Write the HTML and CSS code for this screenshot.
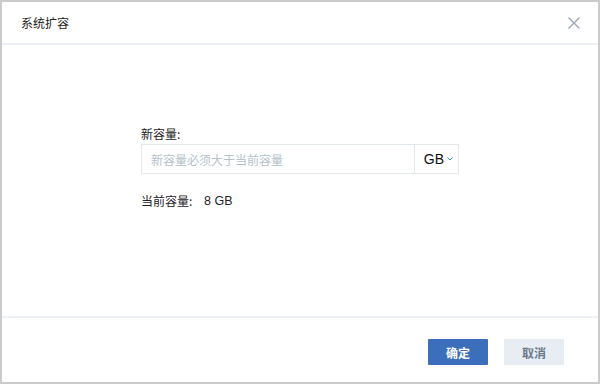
FILE: index.html
```html
<!DOCTYPE html>
<html lang="zh-CN">
<head>
    <meta charset="UTF-8">
    <title>系统扩容</title>
    <link rel="stylesheet" href="styles.css">
</head>
<body>
    <div class="dialog">
        <div class="dialog-header">
            <span class="dialog-title">系统扩容</span>
            <span class="dialog-close">
                <svg width="12" height="12" viewBox="0 0 12 12">
                    <path d="M0.5 0.5 L11.5 11.5 M11.5 0.5 L0.5 11.5" stroke="#9ba6b6" stroke-width="1.4" fill="none"/>
                </svg>
            </span>
        </div>

        <div class="dialog-body">
            <div class="form">
                <label class="form-label" for="capacity">新容量:</label>
                <div class="input-group">
                    <input type="text" id="capacity" placeholder="新容量必须大于当前容量">
                    <div class="unit-select">
                        <span>GB</span>
                        <svg width="6" height="4" viewBox="0 0 6 4">
                            <path d="M0.5 0.5 L3 3 L5.5 0.5" stroke="#4a86d6" stroke-width="1" fill="none"/>
                        </svg>
                    </div>
                </div>
                <div class="current">
                    <span class="current-label">当前容量:</span>
                    <span class="current-value">8 GB</span>
                </div>
            </div>
        </div>

        <div class="dialog-footer">
            <button class="btn btn-primary">确定</button>
            <button class="btn btn-default">取消</button>
        </div>
    </div>
</body>
</html>
```

FILE: styles.css
```css
html, body {
    margin: 0;
    padding: 0;
}
body {
    font-family: "Liberation Sans", "Noto Sans CJK SC", sans-serif;
    font-size: 12px;
    color: #1f2329;
    background-color: white;
}
.dialog {
    width: 600px;
    height: 384px;
    box-sizing: border-box;
    border: 2px solid #cbcbcb;
    display: flex;
    flex-direction: column;
    background-color: white;
}
.dialog-header {
    height: 43px;
    box-sizing: border-box;
    border-bottom: 2px solid #edf1f5;
    display: flex;
    align-items: center;
    justify-content: space-between;
    padding: 0 18px 0 19px;
}
.dialog-title {
    font-family: "Noto Sans CJK SC", sans-serif;
    font-size: 12px;
    color: #222;
}
.dialog-close {
    display: flex;
    width: 12px;
    height: 12px;
    margin-top: 1px;
}
.dialog-body {
    flex: 1;
    display: flex;
    justify-content: center;
    padding-top: 81px;
}
.form {
    width: 318px;
}
.form-label {
    display: block;
    font-family: "Noto Sans CJK SC", sans-serif;
    font-size: 12px;
    line-height: 16px;
    margin-bottom: 2px;
    color: #222;
}
.input-group {
    display: flex;
    height: 30px;
    box-sizing: border-box;
    border: 1px solid #e2e7ed;
}
.input-group input {
    flex: 1;
    border: none;
    outline: none;
    padding: 0 0 0 9px;
    font-family: "Noto Sans CJK SC", sans-serif;
    font-size: 12px;
    color: #222;
    min-width: 0;
}
.input-group input::placeholder {
    color: #b6c0cd;
}
.unit-select {
    width: 44px;
    box-sizing: border-box;
    border-left: 1px solid #e2e7ed;
    display: flex;
    align-items: center;
    justify-content: flex-end;
    padding-right: 5px;
    gap: 3px;
    font-size: 14px;
    color: #111;
}
.current {
    margin-top: 18px;
    display: flex;
    align-items: center;
    font-size: 12px;
}
.current-label {
    font-family: "Noto Sans CJK SC", sans-serif;
    width: 63px;
}
.current-value {
    font-size: 12.5px;
}
.dialog-footer {
    height: 66px;
    box-sizing: border-box;
    border-top: 2px solid #edf1f5;
    display: flex;
    justify-content: flex-end;
    align-items: flex-start;
    padding: 21px 34px 0 0;
    gap: 16px;
}
.btn {
    width: 60px;
    height: 26px;
    border: none;
    border-radius: 1px;
    font-family: "Noto Sans CJK SC", sans-serif;
    font-size: 12px;
    font-weight: 600;
    cursor: pointer;
    padding: 0;
}
.btn-primary {
    background-color: #3b6fbb;
    color: white;
}
.btn-default {
    background-color: #e8edf3;
    color: #6d7a8c;
}
```
